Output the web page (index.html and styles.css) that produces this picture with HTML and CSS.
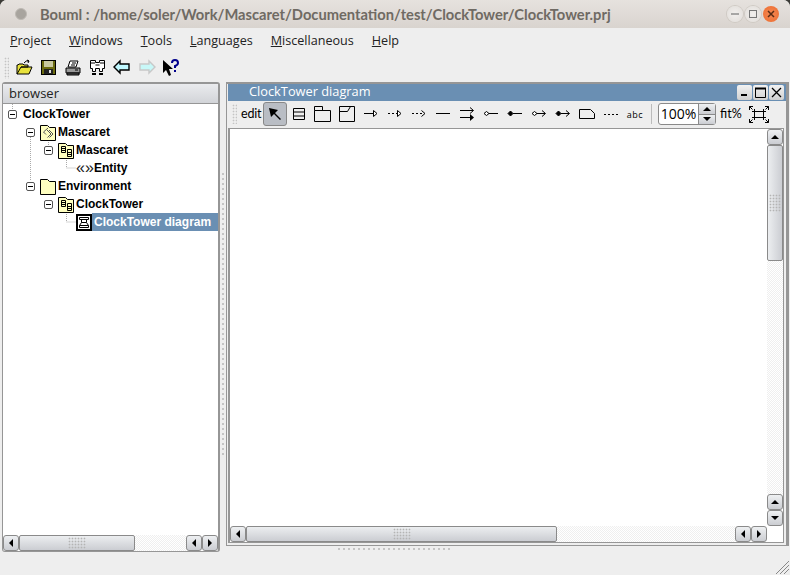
FILE: index.html
```html
<!DOCTYPE html>
<html lang="en-US">
  <head>
    <meta charset="UTF-8">
    <title>Bouml</title>
    <link rel="stylesheet" href="styles.css">
  </head>
  <body>
    <div id="window">
      <header class="titlebar">
        <span class="wm-dot"></span>
        <span class="title">Bouml : /home/soler/Work/Mascaret/Documentation/test/ClockTower/ClockTower.prj</span>
        <div class="wm-buttons">
          <span class="wm-btn"><svg width="10" height="10"><path d="M1 5H9" stroke="#777" stroke-width="1.2"/></svg></span>
          <span class="wm-btn"><svg width="10" height="10"><rect x="1.5" y="1.5" width="7" height="7" fill="none" stroke="#777"/></svg></span>
          <span class="wm-btn wm-close"><svg width="10" height="10"><path d="M2 2L8 8M8 2L2 8" stroke="#5a2c14" stroke-width="1.5"/></svg></span>
        </div>
      </header>
      <nav class="menubar">
        <a><u>P</u>roject</a>
        <a><u>W</u>indows</a>
        <a><u>T</u>ools</a>
        <a><u>L</u>anguages</a>
        <a><u>M</u>iscellaneous</a>
        <a><u>H</u>elp</a>
      </nav>
      <div class="toolbar">
        <span class="grip"></span>
        <!-- open -->
        <svg class="tool" width="18" height="18"><path d="M2 15V6H3L4 5H8L9 6H13V8H6L2 15H14L17 8H6" fill="#e8e23c" stroke="#000"/><path d="M9 4Q11 1 14 2M14 2L12 1M14 2L13 4" fill="none" stroke="#000"/></svg>
        <!-- save -->
        <svg class="tool" width="18" height="18"><rect x="1.5" y="1.5" width="14" height="14" fill="#6b6b10" stroke="#000"/><rect x="4" y="2" width="9" height="6" fill="#c8c8a0"/><rect x="4" y="10" width="9" height="5" fill="#222"/><rect x="9" y="11" width="2" height="3" fill="#ddd"/></svg>
        <!-- print -->
        <svg class="tool" width="18" height="18"><path d="M6 2H14L12 8H4Z" fill="#fff" stroke="#000"/><path d="M2 9H16V14H2Z" fill="#999" stroke="#000"/><path d="M3 14H15V16H3Z" fill="#555" stroke="#000"/><path d="M8 4H12M7 6H11M11 11H14" stroke="#000"/></svg>
        <!-- find -->
        <svg class="tool" width="18" height="18"><path d="M1.5 1.5H6.5V3.5H10.5V1.5H15.5V9.5H13.5V12.5H10.5V9.5H6.5V12.5H3.5V9.5H1.5Z" fill="#fff" stroke="#000"/><path d="M6.5 6H10.5M2 4H6M11 4H15" stroke="#000"/><path d="M3 15H7M10 15H14" stroke="#000" stroke-width="2"/></svg>
        <!-- back / forward -->
        <svg class="tool" width="18" height="18"><path d="M1 8L7 2V5H16V11H7V14Z" fill="#c0f8ff" stroke="#000" stroke-width="1.4"/></svg>
        <svg class="tool" width="18" height="18"><path d="M17 8L11 2V5H2V11H11V14Z" fill="#c8f8f8" stroke="#c8c8c8" stroke-width="1.4"/></svg>
        <!-- help -->
        <svg class="tool" width="18" height="18"><path d="M1 1L1 14L4 11L7 17L9 16L7 10L11 10Z" fill="#000"/><path d="M10 4Q10 1 13 1T16 4Q16 6 13 7V9M13 11V13" fill="none" stroke="#00008b" stroke-width="2"/></svg>
      </div>
      <div class="workspace">
        <aside class="browser">
          <div class="browser-head">browser</div>
          <div class="tree">
            <svg class="tree-lines" width="100" height="130">
              <path d="M9.5 0V5M27.5 33V76M45.5 38V42M63.5 56V64H73M45.5 88V92M63.5 106V118H73" fill="none" stroke="#aaa" stroke-dasharray="1 1"/>
            </svg>
            <div class="node lvl0"><i class="exp"></i>ClockTower</div>
            <div class="node lvl1"><i class="exp"></i>
              <svg class="nicon" width="17" height="17"><path d="M.5 16.5V1.5H7.5L9.5 3.5H15.5V16.5Z" fill="#ffffc0" stroke="#000"/><path d="M8 4L3.5 8L6 10.5M7 6L11 10L7.5 13.5M9 6L13 10L9.5 13.5" fill="none" stroke="#555"/></svg>Mascaret</div>
            <div class="node lvl2"><i class="exp"></i>
              <svg class="nicon" width="17" height="17"><path d="M.5 16.5V1.5H7.5L9.5 3.5H15.5V16.5Z" fill="#ffffc0" stroke="#000"/><path d="M3.5 4.5H7.5V10.5H3.5ZM3.5 6.5H7.5M3.5 8.5H7.5M9.5 7.5H13.5V14.5H9.5ZM9.5 10.5H13.5M9.5 12.5H13.5" fill="none" stroke="#000"/></svg>Mascaret</div>
            <div class="node lvl3"><span class="stereo">«»</span>Entity</div>
            <div class="node lvl1"><i class="exp"></i>
              <svg class="nicon" width="17" height="17"><path d="M.5 16.5V1.5H7.5L9.5 3.5H15.5V16.5Z" fill="#ffffc0" stroke="#000"/></svg>Environment</div>
            <div class="node lvl2"><i class="exp"></i>
              <svg class="nicon" width="17" height="17"><path d="M.5 16.5V1.5H7.5L9.5 3.5H15.5V16.5Z" fill="#ffffc0" stroke="#000"/><path d="M3.5 4.5H7.5V10.5H3.5ZM3.5 6.5H7.5M3.5 8.5H7.5M9.5 7.5H13.5V14.5H9.5ZM9.5 10.5H13.5M9.5 12.5H13.5" fill="none" stroke="#000"/></svg>ClockTower</div>
            <div class="node lvl4">
              <svg class="diag" width="16" height="17"><rect x="1" y="1" width="14" height="15" fill="#fff" stroke="#000" stroke-width="2"/><path d="M3.5 3.5H12.5V5.5H3.5ZM5.5 5.5H10.5V8.5H5.5ZM5.5 8.5L3.5 11.5H12.5L10.5 8.5M3.5 11.5V13.5H12.5V11.5" fill="none" stroke="#000"/></svg>
              <span class="selected">ClockTower diagram</span></div>
          </div>
          <div class="hscroll short">
            <span class="sb-btn"><b class="tri left"></b></span>
            <span class="thumb h-thumb browser-thumb"></span>
            <span class="trough"></span>
            <span class="sb-btn"><b class="tri left"></b></span>
            <span class="sb-btn"><b class="tri right"></b></span>
          </div>
        </aside>
        <div class="splitter"></div>
        <section class="mdi">
          <div class="mdi-title">
            <span class="mdi-name">ClockTower diagram</span>
            <span class="mdi-btn"><svg width="9" height="9"><path d="M1 7H7" stroke="#000" stroke-width="2"/></svg></span>
            <span class="mdi-btn"><svg width="11" height="11"><path d="M.5 1.5H10.5V10.5H.5Z" fill="none" stroke="#000"/><path d="M0 1.5H11" stroke="#000" stroke-width="2"/></svg></span>
            <span class="mdi-btn"><svg width="11" height="11"><path d="M1 1L10 10M10 1L1 10" stroke="#000" stroke-width="1.3"/></svg></span>
          </div>
          <div class="diagram-bar">
            <span class="grip small"></span>
            <span class="edit">edit</span>
            <span class="dbtn active"><svg width="14" height="14"><path d="M1 1L10 3L7 6L13 12L12 13L6 7L3 10Z" fill="#000"/></svg></span>
            <span class="dbtn"><svg width="14" height="14"><path d="M1.5 1.5H12.5V12.5H1.5ZM1.5 5H12.5M1.5 9H12.5" fill="none" stroke="#000"/></svg></span>
            <span class="dbtn"><svg width="18" height="16"><path d="M.5 4.5H16.5V15.5H.5ZM.5 4.5V.5H8.5V4.5" fill="none" stroke="#000"/></svg></span>
            <span class="dbtn"><svg width="18" height="16"><path d="M1.5 .5H16.5V15.5H1.5ZM1.5 5.5H9.5L12.5 .5" fill="none" stroke="#000"/></svg></span>
            <span class="dbtn"><svg width="16" height="12"><path d="M1 5.5H10" stroke="#000"/><path d="M10.5 2.5L14 5.5L10.5 8.5Z" fill="#fff" stroke="#000"/></svg></span>
            <span class="dbtn"><svg width="16" height="12"><path d="M1 5.5H10" stroke="#000" stroke-dasharray="2 2"/><path d="M10.5 2.5L14 5.5L10.5 8.5Z" fill="#fff" stroke="#000"/></svg></span>
            <span class="dbtn"><svg width="16" height="12"><path d="M1 5.5H13" stroke="#000" stroke-dasharray="2 2"/><path d="M10.5 2.5L14 5.5L10.5 8.5" fill="none" stroke="#000"/></svg></span>
            <span class="dbtn"><svg width="16" height="12"><path d="M1 5.5H15" stroke="#000"/></svg></span>
            <span class="dbtn"><svg width="16" height="16"><path d="M1 4.5H14M11 1.5L14.5 4.5L11 7.5M1 11.5H11" fill="none" stroke="#000"/><path d="M11 8L15 11.5L11 15Z" fill="#000"/></svg></span>
            <span class="dbtn"><svg width="16" height="12"><path d="M6 5.5H15" stroke="#000"/><path d="M1 5.5L3.5 3.5L6 5.5L3.5 7.5Z" fill="#fff" stroke="#000"/></svg></span>
            <span class="dbtn"><svg width="16" height="12"><path d="M6 5.5H15" stroke="#000"/><path d="M1 5.5L3.5 3L6 5.5L3.5 8Z" fill="#000" stroke="#000"/></svg></span>
            <span class="dbtn"><svg width="16" height="12"><path d="M6 5.5H14M11 2.5L14.5 5.5L11 8.5" fill="none" stroke="#000"/><path d="M1 5.5L3.5 3.5L6 5.5L3.5 7.5Z" fill="#fff" stroke="#000"/></svg></span>
            <span class="dbtn"><svg width="16" height="12"><path d="M6 5.5H14M11 2.5L14.5 5.5L11 8.5" fill="none" stroke="#000"/><path d="M1 5.5L3.5 3L6 5.5L3.5 8Z" fill="#000" stroke="#000"/></svg></span>
            <span class="dbtn"><svg width="16" height="12"><path d="M.5 1.5H11.5L15.5 5.5V10.5H.5Z" fill="none" stroke="#000"/></svg></span>
            <span class="dbtn"><svg width="16" height="12"><path d="M1 6.5H15" stroke="#000" stroke-dasharray="2 2"/></svg></span>
            <span class="dbtn abc">abc</span>
            <span class="sep"></span>
            <span class="spin">
              <span class="spin-val">100%</span>
              <span class="spin-arrows"><span><b class="tri up"></b></span><span><b class="tri down"></b></span></span>
            </span>
            <span class="fit">fit%</span>
            <svg class="fit-icon" width="20" height="17"><path d="M3 5.5H17M3 11.5H17M5.5 3V14M14.5 3V14" stroke="#000" fill="none"/><path d="M.5 4V.5H4M.5 .5L3.5 3.5M19.5 4V.5H16M19.5 .5L16.5 3.5M.5 13V16.5H4M.5 16.5L3.5 13.5M19.5 13V16.5H16M19.5 16.5L16.5 13.5" stroke="#000" fill="none"/></svg>
          </div>
          <div class="canvas-frame">
            <div class="canvas-row">
              <div class="canvas"></div>
              <div class="vscroll">
                <span class="sb-btn"><b class="tri up"></b></span>
                <span class="thumb v-thumb"></span>
                <span class="trough"></span>
                <span class="sb-btn"><b class="tri up"></b></span>
                <span class="sb-btn"><b class="tri down"></b></span>
              </div>
            </div>
            <div class="hscroll wide">
              <span class="sb-btn"><b class="tri left"></b></span>
              <span class="thumb h-thumb canvas-thumb"></span>
              <span class="trough"></span>
              <span class="sb-btn"><b class="tri left"></b></span>
              <span class="sb-btn"><b class="tri right"></b></span>
            </div>
          </div>
        </section>
      </div>
      <footer class="statusbar">
        <span class="hsplit"></span>
        <svg class="resize" width="14" height="14"><path d="M14 1L1 14M14 5L5 14M14 9L9 14" stroke="#888"/></svg>
      </footer>
    </div>
  </body>
</html>
```

FILE: styles.css
```css
html, body {
  margin: 0;
  padding: 0;
  background: #3c3b37;
}
#window {
  position: relative;
  width: 790px;
  height: 575px;
  display: flex;
  flex-direction: column;
  box-sizing: border-box;
  background: #eeeeee;
  border-radius: 7px 7px 0 0;
  overflow: hidden;
  font-family: "Open Sans", "DejaVu Sans", sans-serif;
  font-size: 12px;
  color: #000;
}
svg {
  display: block;
}
.titlebar {
  height: 28px;
  flex: none;
  display: flex;
  align-items: center;
  background: linear-gradient(#e6e2de, #d9d4cf);
}
.wm-dot {
  width: 10px;
  height: 10px;
  margin-left: 15px;
  border-radius: 50%;
  background: #a8a49e;
  border: 1px solid #bdb9b3;
}
.title {
  margin-left: 13px;
  font-family: Lato, "Open Sans", sans-serif;
  font-size: 14.7px;
  font-weight: 700;
  color: #6f6a63;
  white-space: nowrap;
}
.wm-buttons {
  margin-left: auto;
  margin-right: 11px;
  display: flex;
  gap: 2px;
}
.wm-btn {
  width: 16px;
  height: 16px;
  border-radius: 50%;
  display: flex;
  align-items: center;
  justify-content: center;
  background: radial-gradient(#f2f0ee, #e0dcd8);
  box-shadow: 0 0 0 1px #cfcac4;
}
.wm-close {
  background: radial-gradient(#f58a55, #ec6a2c);
  box-shadow: none;
}
.menubar {
  height: 24px;
  flex: none;
  display: flex;
  align-items: center;
  gap: 18px;
  padding-left: 10px;
  font-size: 12.6px;
  color: #222;
}
.toolbar {
  height: 30px;
  flex: none;
  box-sizing: border-box;
  padding: 1px 0 0 4px;
  display: flex;
  align-items: center;
}
.toolbar .tool {
  margin-right: 6.5px;
}
.toolbar .tool:nth-of-type(1) {
  margin-left: 6px;
}
.grip {
  width: 5px;
  height: 22px;
  background-image: radial-gradient(#c4c4c4 40%, transparent 50%);
  background-size: 3px 3px;
}
.grip.small {
  height: 20px;
}
.workspace {
  flex: 1;
  min-height: 0;
  display: flex;
  padding: 0 1px 0 2px;
}
.browser {
  width: 218px;
  height: 470px;
  box-sizing: border-box;
  display: flex;
  flex-direction: column;
  background: #fff;
  border: 1px solid #969696;
  border-width: 2px 2px 1px 1px;
  border-radius: 3px;
}
.browser-head {
  height: 20px;
  flex: none;
  box-sizing: border-box;
  padding-left: 6px;
  line-height: 19px;
  font-size: 13px;
  background: linear-gradient(#eaebee, #d2d4d8);
  border-bottom: 1px solid #969696;
  color: #222;
}
.tree {
  position: relative;
  flex: 1;
  padding-top: 1px;
  font-family: "Liberation Sans", Arial, sans-serif;
  font-size: 12px;
  font-weight: 700;
}
.tree-lines {
  position: absolute;
  left: 0;
  top: 0;
}
.node {
  position: relative;
  height: 18px;
  display: flex;
  align-items: center;
  white-space: nowrap;
}
.lvl0 { padding-left: 5px; }
.lvl1 { padding-left: 23px; }
.lvl2 { padding-left: 41px; }
.lvl3 { padding-left: 73px; }
.lvl4 { padding-left: 73px; }
.exp {
  position: relative;
  width: 9px;
  height: 9px;
  box-sizing: border-box;
  margin-right: 6px;
  flex: none;
  background: #fff;
  border: 1px solid #555;
  border-radius: 2px;
}
.exp::after {
  content: '';
  position: absolute;
  left: 1px;
  top: 3px;
  width: 5px;
  height: 1px;
  background: #000;
}
.nicon {
  flex: none;
  margin-left: -1px;
  margin-right: 1px;
}
.diag {
  flex: none;
}
.stereo {
  width: 18px;
  font-weight: 400;
  font-size: 16px;
  color: #222;
}
.selected {
  display: block;
  flex: 1;
  height: 18px;
  line-height: 18px;
  padding-left: 2px;
  background: #6a8fb3;
  color: #fff;
}
.hscroll {
  flex: none;
  display: flex;
  height: 16px;
}
.sb-btn {
  width: 16px;
  height: 16px;
  flex: none;
  box-sizing: border-box;
  display: flex;
  align-items: center;
  justify-content: center;
  border: 1px solid #8a8a8a;
  border-radius: 3px;
  background: linear-gradient(#eef0f2, #cbcdd2);
}
.thumb {
  flex: none;
  box-sizing: border-box;
  display: flex;
  align-items: center;
  justify-content: center;
  border: 1px solid #8a8a8a;
  border-radius: 2px;
}
.thumb::after {
  content: '';
  background-image: radial-gradient(#b4b4b4 40%, transparent 50%);
  background-size: 3px 3px;
}
.h-thumb {
  height: 16px;
  background: linear-gradient(#eceef0, #cbcdd2);
}
.h-thumb::after {
  width: 18px;
  height: 12px;
}
.v-thumb::after {
  width: 12px;
  height: 18px;
}
.browser-thumb { width: 116px; }
.canvas-thumb { width: 311px; }
.v-thumb {
  width: 16px;
  height: 116px;
  background: linear-gradient(90deg, #eceef0, #cbcdd2);
}
.trough {
  flex: 1;
  background-image: repeating-conic-gradient(#efefef 0 25%, #ffffff 0 50%);
  background-size: 2px 2px;
}
.tri {
  display: block;
  width: 0;
  height: 0;
  border: 4px solid transparent;
}
.tri.left { border-right-color: #000; border-left-width: 0; }
.tri.right { border-left-color: #000; border-right-width: 0; }
.tri.up { border-bottom-color: #000; border-top-width: 0; }
.tri.down { border-top-color: #000; border-bottom-width: 0; }
.splitter {
  width: 6px;
  flex: none;
  display: flex;
  justify-content: center;
}
.splitter::before {
  content: '';
  width: 2px;
  height: 284px;
  margin-top: 91px;
  background: repeating-linear-gradient(#c4c4c4 0 2px, transparent 2px 5px);
}
.mdi {
  width: 563px;
  height: 464px;
  box-sizing: border-box;
  display: flex;
  flex-direction: column;
  padding-left: 1px;
  border: 2px solid #969696;
  border-left-width: 1px;
  border-right-width: 3px;
  border-bottom-width: 1px;
}
.mdi-title {
  height: 17px;
  flex: none;
  display: flex;
  align-items: center;
  background: #6a8fb3;
  color: #fff;
  font-size: 12.8px;
  padding-right: 2px;
}
.mdi-name {
  margin-left: 21px;
  margin-right: auto;
  margin-bottom: 3px;
}
.mdi-btn {
  width: 15px;
  height: 15px;
  margin-left: 1px;
  box-sizing: border-box;
  display: flex;
  align-items: center;
  justify-content: center;
  background: linear-gradient(#f2f2f2, #d0d0d0);
  border-radius: 2px;
}
.diagram-bar {
  height: 26px;
  flex: none;
  display: flex;
  align-items: center;
  padding-left: 4px;
  background: #eeeeee;
}
.edit {
  margin-left: 4px;
  margin-right: 4px;
  margin-bottom: 1px;
  font-family: Lato, sans-serif;
  font-size: 12.5px;
  letter-spacing: -0.2px;
  width: 18px;
}
.dbtn {
  width: 24px;
  height: 24px;
  flex: none;
  box-sizing: border-box;
  display: flex;
  align-items: center;
  justify-content: center;
}
.dbtn.active {
  background: #b9bdc4;
  border: 1px solid #888;
  border-radius: 3px;
}
.abc {
  font-size: 9px;
  letter-spacing: 0.5px;
}
.sep {
  width: 1px;
  height: 20px;
  margin: 0 6px 0 4px;
  background: #bbb;
}
.spin {
  display: flex;
  height: 22px;
  box-sizing: border-box;
  border: 1px solid #8a8a8a;
  border-radius: 3px;
  background: #fff;
}
.spin-val {
  width: 39px;
  text-align: center;
  line-height: 20px;
  font-size: 14px;
}
.spin-arrows {
  width: 17px;
  display: flex;
  flex-direction: column;
}
.spin-arrows span {
  flex: 1;
  display: flex;
  align-items: center;
  justify-content: center;
  background: linear-gradient(#eef0f2, #cbcdd2);
  border-left: 1px solid #8a8a8a;
}
.spin-arrows span:first-child {
  border-bottom: 1px solid #8a8a8a;
}
.fit {
  margin-left: 4px;
  margin-bottom: 1px;
  font-family: Lato, sans-serif;
  font-size: 12.5px;
}
.fit-icon {
  margin-left: 7px;
}
.canvas-frame {
  flex: 1;
  min-height: 0;
  display: flex;
  flex-direction: column;
  margin: 1px 2px 2px 0;
  border: 1px solid #969696;
  border-left-width: 2px;
  background: #fff;
}
.canvas-row {
  flex: 1;
  min-height: 0;
  display: flex;
}
.canvas {
  flex: 1;
}
.vscroll {
  width: 16px;
  flex: none;
  display: flex;
  flex-direction: column;
}
.wide {
  padding-right: 16px;
}
.statusbar {
  position: relative;
  height: 27px;
  flex: none;
}
.hsplit {
  position: absolute;
  left: 338px;
  top: 0;
  width: 114px;
  height: 2px;
  background: repeating-linear-gradient(90deg, #c4c4c4 0 2px, transparent 2px 5px);
}
.resize {
  position: absolute;
  right: 1px;
  bottom: 1px;
}
```
